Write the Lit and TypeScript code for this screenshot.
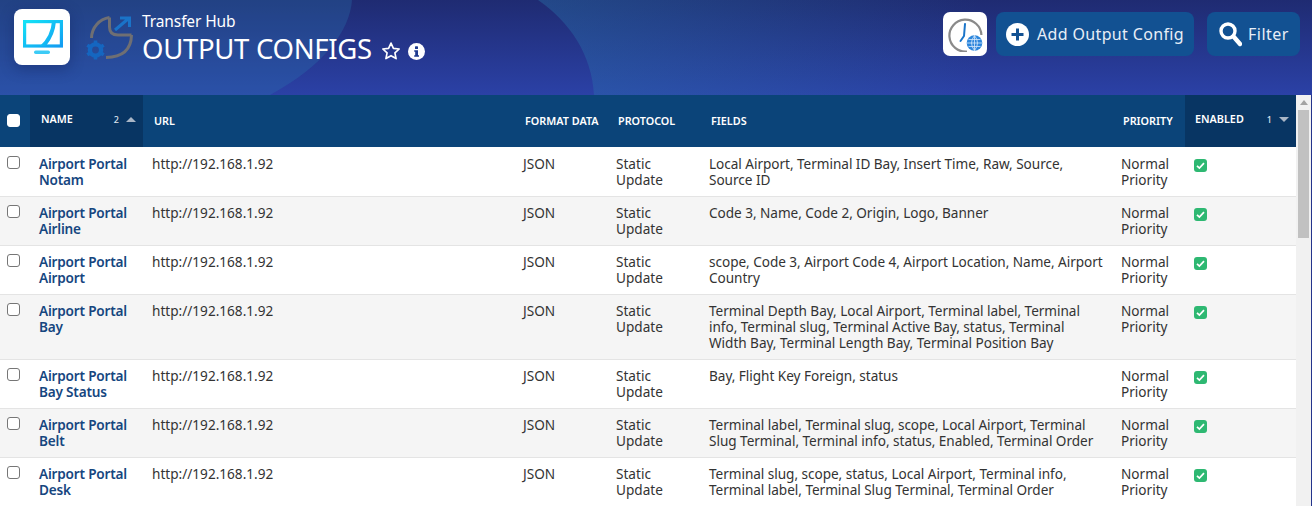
import { LitElement, html, css } from "lit";
import { customElement } from "lit/decorators.js";

const URL_TXT = "http://192.168.1.92";
const rows: [string, string, string, number][] = [
  ["Airport Portal", "Notam", "Local Airport, Terminal ID Bay, Insert Time, Raw, Source,<br>Source ID", 49],
  ["Airport Portal", "Airline", "Code 3, Name, Code 2, Origin, Logo, Banner", 49],
  ["Airport Portal", "Airport", "scope, Code 3, Airport Code 4, Airport Location, Name, Airport<br>Country", 49],
  ["Airport Portal", "Bay", "Terminal Depth Bay, Local Airport, Terminal label, Terminal<br>info, Terminal slug, Terminal Active Bay, status, Terminal<br>Width Bay, Terminal Length Bay, Terminal Position Bay", 65],
  ["Airport Portal", "Bay Status", "Bay, Flight Key Foreign, status", 49],
  ["Airport Portal", "Belt", "Terminal label, Terminal slug, scope, Local Airport, Terminal<br>Slug Terminal, Terminal info, status, Enabled, Terminal Order", 49],
  ["Airport Portal", "Desk", "Terminal slug, scope, status, Local Airport, Terminal info,<br>Terminal label, Terminal Slug Terminal, Terminal Order", 49],
];

@customElement("app-root")
export class AppRoot extends LitElement {
  static styles = css`
    :host { display: block; width: 1312px; height: 506px; overflow: hidden; font-family: "Noto Sans", "Open Sans", sans-serif; background: #24358c; }
    .header { height: 95px; display: flex; position: relative; overflow: hidden; background: linear-gradient(180deg, #1f2b72 0%, #2b41a6 100%); box-sizing: border-box; padding: 9px 12px 0 14px; }
    .blob { position: absolute; left: 0; top: 0; width: 1312px; height: 95px; }
    .header > *:not(.blob) { position: relative; }
    .appicon { width: 56px; height: 56px; border-radius: 8px; background: #fff; box-shadow: 0 4px 14px rgba(15,25,80,.35); flex: none; }
    .appicon svg, .logo svg { display: block; }
    .logo { margin: 5px 0 0 16px; flex: none; }
    .titles { margin: 2px 0 0 8px; color: #fff; flex: none; }
    .sub { font-size: 15.5px; line-height: 20px; letter-spacing: -.1px; }
    .title { font-size: 27.5px; line-height: 36px; display: flex; align-items: center; letter-spacing: -.3px; white-space: nowrap; }
    .star { margin: 4px 0 0 9px; }
    .info { margin: 4px 0 0 7px; }
    .spacer { flex: 1; }
    .actions { display: flex; align-items: flex-start; padding-top: 3px; }
    .clock { width: 44px; height: 44px; border-radius: 7px; background: #fff; display: flex; align-items: center; justify-content: center; margin-right: 9px; }
    .btn { height: 44px; border-radius: 8px; background: #125192; color: #e8eef7; display: flex; align-items: center; font-size: 16px; box-sizing: border-box; letter-spacing: .35px; }
    .add { width: 198px; padding-left: 10px; gap: 8px; margin-right: 13px; }
    .filter { width: 93px; padding-left: 11px; gap: 6px; letter-spacing: .5px; }
    .body { display: flex; height: 411px; }
    .content { width: 1296px; background: #fff; overflow: hidden; flex: none; }
    .grid { display: grid; grid-template-columns: 30px 113px 371px 93px 93px 412px 73px 111px; }
    .th { height: 52px; background: #0b4479; color: #fff; font-size: 10.8px; font-weight: 600; display: flex; align-items: center; box-sizing: border-box; padding-bottom: 2px; }
    .th.sorted { background: #083563; justify-content: space-between; align-items: flex-start; padding-top: 16px; padding-bottom: 0; }
    .th.sorted .label { line-height: 16px; }
    .sortinfo { display: flex; align-items: center; font-size: 9px; gap: 7px; color: #dfe6ef; height: 16px; font-weight: 500; }
    .tri { width: 0; height: 0; border-left: 5px solid transparent; border-right: 5px solid transparent; }
    .up { border-bottom: 5px solid #a9b6c6; }
    .down { border-top: 5px solid #a9b6c6; }
    .td { box-sizing: border-box; padding-top: 8px; font-size: 13.6px; line-height: 16px; color: #333; border-top: 1px solid #e4e4e4; white-space: nowrap; }
    .first { border-top-color: #fff; }
    .alt { background: #f5f5f5; }
    .name { color: #16467f; font-weight: 600; letter-spacing: -.2px; white-space: normal; padding-left: 9px; }
    .p9 { padding-left: 9px; }
    .fields { padding-left: 9px; letter-spacing: -.04px; }
    .cb { box-sizing: border-box; width: 13px; height: 13px; border: 1px solid #767676; border-radius: 3px; background: #fff; display: block; }
    .cbcell { padding: 8px 0 0 7px; }
    .thcb { padding-left: 7px; }
    .thcb .cb { border-color: #fff; }
    .check { display: block; margin-top: 3px; }
    .scroll { width: 15px; flex: none; background: #f1f1f1; position: relative; display: flex; flex-direction: column; align-items: center; }
    .sarrow { margin-top: 5px; width: 0; height: 0; border-left: 4px solid transparent; border-right: 4px solid transparent; border-bottom: 5px solid #a3a3a3; }
    .thumb { position: absolute; left: 2px; right: 2px; top: 15px; height: 128px; background: #c1c1c1; }
    .edge { width: 1px; flex: none; background: #24358c; }
  `;

  render() {
    return html`
      <div class="header">
        <svg class="blob" viewBox="0 0 1312 95">
          <defs>
            <linearGradient id="rg" x1="538" y1="0" x2="980" y2="0" gradientUnits="userSpaceOnUse">
              <stop offset="0" stop-color="#2a7cb0" stop-opacity=".36"/>
              <stop offset="1" stop-color="#2a7cb0" stop-opacity="0"/>
            </linearGradient>
          </defs>
          <path d="M0 0 H352 C350 30 325 65 270 95 H0 Z" fill="#2a76b0" opacity=".3"/>
          <path d="M538 0 C570 22 592 55 594 95 H1000 V0 Z" fill="url(#rg)"/>
        </svg>
        <div class="appicon">
          <svg width="56" height="56" viewBox="14 9 56 56" fill="none">
            <defs>
              <linearGradient id="g1" x1="0" y1="0" x2="1" y2="1"><stop offset="0" stop-color="#14e2f6"/><stop offset="1" stop-color="#129cf2"/></linearGradient>
            </defs>
            <rect x="24.6" y="21.6" width="36.8" height="24.4" fill="none" stroke="url(#g1)" stroke-width="3.2"/>
            <path d="M52 21 H56 Q55 35 46 46 H40 Q51 36 52 21 Z" fill="url(#g1)"/>
            <rect x="34" y="50.5" width="16" height="3.5" rx="1.7" fill="#3ccbf6"/>
          </svg>
        </div>
        <div class="logo">
          <svg width="48" height="48" viewBox="86 14 48 48" fill="none">
            <path d="M109.5 17.5 A21 21 0 0 0 91.5 38" stroke="#6f6f73" stroke-width="3"/>
            <path d="M109.5 17.5 V27 Q109.5 35 118 35 H131.5" stroke="#6f6f73" stroke-width="3"/>
            <path d="M131.5 35 Q131 57 106 57.5" stroke="#6f6f73" stroke-width="3"/>
            <path d="M115 30 L128 19 M120 18 H129.5 V27" stroke="#1a73c8" stroke-width="3"/>
            <circle cx="95.5" cy="50" r="5.6" stroke="#1566c0" stroke-width="4.4"/>
            <path d="M95.5 40.5 V43.5 M95.5 56.5 V59.5 M87.3 45.2 L90 46.8 M101 53.2 L103.7 54.8 M87.3 54.8 L90 53.2 M101 46.8 L103.7 45.2" stroke="#1566c0" stroke-width="3.6"/>
          </svg>
        </div>
        <div class="titles">
          <div class="sub">Transfer Hub</div>
          <div class="title">OUTPUT CONFIGS
            <svg class="star" width="20" height="20" viewBox="0 0 24 24" fill="none" stroke="#fff" stroke-width="2"><path d="M12 2.5l2.9 6.3 6.9.8-5.1 4.7 1.4 6.8-6.1-3.5-6.1 3.5 1.4-6.8L2.2 9.6l6.9-.8z" stroke-linejoin="round"/></svg>
            <svg class="info" width="17" height="17" viewBox="0 0 17 17"><circle cx="8.5" cy="8.5" r="8.5" fill="#fff"/><rect x="7" y="3.2" width="3" height="2.8" rx=".6" fill="#1f3b8f"/><path d="M6.2 7.2h3.8v5h1v1.6H6.2v-1.6h1v-3.4h-1z" fill="#1f3b8f"/></svg>
          </div>
        </div>
        <div class="spacer"></div>
        <div class="actions">
          <div class="clock">
            <svg width="36" height="36" viewBox="0 0 36 36" fill="none">
              <path d="M20 35.6 A16 16 0 1 1 34.4 19" stroke="#8a8a8a" stroke-width="2.2"/>
              <path d="M18 8 L17 20 L13.5 25" stroke="#1b75c9" stroke-width="2" stroke-linecap="round"/>
              <circle cx="27.5" cy="27" r="7.8" fill="#2c86dc"/>
              <path d="M20 27 H35 M27.5 19.5 V34.5 M21.5 23.5 H33.5 M21.5 30.5 H33.5 M27.5 19.5 Q21.5 27 27.5 34.5 M27.5 19.5 Q33.5 27 27.5 34.5" stroke="#d5e8fb" stroke-width=".8"/>
            </svg>
          </div>
          <div class="btn add">
            <svg width="23" height="23" viewBox="0 0 23 23"><circle cx="11.5" cy="11.5" r="11.5" fill="#fff"/><path d="M11.5 5.5v12M5.5 11.5h12" stroke="#125192" stroke-width="3"/></svg>
            Add Output Config
          </div>
          <div class="btn filter">
            <svg width="24" height="26" viewBox="0 0 24 26" fill="none" stroke="#fff"><circle cx="10" cy="10" r="7" stroke-width="3.4"/><path d="M15.5 15.5 L22 23" stroke-width="4.4" stroke-linecap="round"/></svg>
            Filter
          </div>
        </div>
      </div>
      <div class="body">
        <div class="content">
          <div class="grid">
            <div class="th thcb"><span class="cb"></span></div>
            <div class="th sorted" style="padding-left:11px;padding-right:7px"><span class="label">NAME</span><span class="sortinfo">2 <i class="tri up"></i></span></div>
            <div class="th" style="padding-left:11px">URL</div>
            <div class="th" style="padding-left:11px">FORMAT DATA</div>
            <div class="th" style="padding-left:11px">PROTOCOL</div>
            <div class="th" style="padding-left:11px">FIELDS</div>
            <div class="th" style="padding-left:11px">PRIORITY</div>
            <div class="th sorted" style="padding-left:10px;padding-right:7px"><span class="label">ENABLED</span><span class="sortinfo">1 <i class="tri down"></i></span></div>
            ${rows.map((r, i) => {
              const alt = i % 2 === 1;
              const c = (extra = "") => `td ${alt ? "alt" : ""} ${i === 0 ? "first" : ""} ${extra}`;
              const h = `height:${r[3]}px`;
              return html`
                <div class=${c("cbcell")} style=${h}><span class="cb"></span></div>
                <div class=${c("name")} style=${h}>${r[0]}<br>${r[1]}</div>
                <div class=${c("p9")} style=${h}>${URL_TXT}</div>
                <div class=${c("p9")} style=${h}>JSON</div>
                <div class=${c("p9")} style=${h}>Static<br>Update</div>
                <div class=${c("fields")} style=${h} .innerHTML=${r[2]}></div>
                <div class=${c("p9")} style=${h}>Normal<br>Priority</div>
                <div class=${c("p9")} style=${h}><svg class="check" width="13" height="13" viewBox="0 0 13 13"><rect width="13" height="13" rx="3" fill="#2eb872"/><path d="M3 6.8l2.4 2.3L10 4.2" fill="none" stroke="#fff" stroke-width="1.7"/></svg></div>
              `;
            })}
          </div>
        </div>
        <div class="scroll"><div class="sarrow"></div><div class="thumb"></div></div>
        <div class="edge"></div>
      </div>
    `;
  }
}
